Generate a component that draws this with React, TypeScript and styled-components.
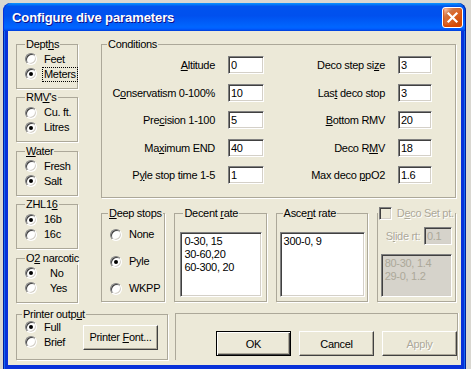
import React from 'react';
import styled, { createGlobalStyle } from 'styled-components';

const GlobalStyle = createGlobalStyle`
  * {
    box-sizing: border-box;
  }

  html,
  body {
    margin: 0;
    padding: 0;
  }

  body {
    background: #d9d7d1;
    color: #000;
    font-family: "Liberation Sans", Arial, sans-serif;
    font-size: 11px;
    letter-spacing: -0.3px;
  }
`;

type RadioGroupType = {
  label: React.ReactNode;
  options: string[];
  checked: number;
  focus?: number;
  indent?: number;
};

const leftGroups: RadioGroupType[] = [
  { label: <>Dept<u>h</u>s</>, options: ['Feet', 'Meters'], checked: 1, focus: 1 },
  { label: <>RM<u>V</u>'s</>, options: ['Cu. ft.', 'Litres'], checked: 1 },
  { label: <><u>W</u>ater</>, options: ['Fresh', 'Salt'], checked: 1 },
  { label: <>ZHL1<u>6</u></>, options: ['16b', '16c'], checked: 0 },
  { label: <>O<u>2</u> narcotic</>, options: ['No', 'Yes'], checked: 0, indent: 6 },
];

const conditions: [React.ReactNode, string, React.ReactNode, string][] = [
  [<><u>A</u>ltitude</>, '0', <>Deco step si<u>z</u>e</>, '3'],
  [<>C<u>o</u>nservatism 0-100%</>, '10', <>Las<u>t</u> deco stop</>, '3'],
  [<>Pre<u>c</u>ision 1-100</>, '5', <><u>B</u>ottom RMV</>, '20'],
  [<>Ma<u>x</u>imum END</>, '40', <>Deco R<u>M</u>V</>, '18'],
  [<>P<u>y</u>le stop time 1-5</>, '1', <>Max deco <u>p</u>pO2</>, '1.6'],
];

const CloseIcon = () => (
  <svg width="13" height="13" viewBox="0 0 13 13">
    <path d="M2.5 2.5 L10.5 10.5 M10.5 2.5 L2.5 10.5" stroke="#fff" strokeWidth="2.2" strokeLinecap="square" />
  </svg>
);

type RadioProps = {
  label: string;
  checked?: boolean;
  focus?: boolean;
  indent?: number;
};

const Radio = (props: RadioProps) => (
  <RadioRow>
    <RadioCircle $checked={props.checked} />
    <RadioText $focus={props.focus} $indent={props.indent}>
      {props.label}
    </RadioText>
  </RadioRow>
);

export default function App() {
  return (
    <>
      <GlobalStyle />
      <Window>
        <TitleBar>
          <Title>Configure dive parameters</Title>
          <CloseButton>
            <CloseIcon />
          </CloseButton>
        </TitleBar>
        <Frame>
          <Client>
            <TopRow>
              <LeftColumn>
                {leftGroups.map((g, i) => (
                  <Group key={i} $pl={8}>
                    <Legend>{g.label}</Legend>
                    <RadioStack>
                      {g.options.map((o, j) => (
                        <Radio
                          key={o}
                          label={o}
                          checked={g.checked === j}
                          focus={g.focus === j}
                          indent={g.indent}
                        />
                      ))}
                    </RadioStack>
                  </Group>
                ))}
              </LeftColumn>

              <RightColumn>
                <Group $pt={5.5} $pb={12.5}>
                  <Legend $lx={5}>Conditions</Legend>
                  <FieldGrid>
                    {conditions.map((row, i) => (
                      <React.Fragment key={i}>
                        <FieldLabel>{row[0]}</FieldLabel>
                        <Edit $w={36} readOnly value={row[1]} />
                        <FieldLabel>{row[2]}</FieldLabel>
                        <Edit $w={34} readOnly value={row[3]} />
                      </React.Fragment>
                    ))}
                  </FieldGrid>
                </Group>

                <LowerRow>
                  <Group $w={65} $pl={8} $pt={7}>
                    <Legend $lx={-2}><u>D</u>eep stops</Legend>
                    <DeepStack>
                      <Radio label="None" />
                      <Radio label="Pyle" checked />
                      <Radio label="WKPP" />
                    </DeepStack>
                  </Group>

                  <Group $w={93} $pl={5} $pr={4} $pt={12} $pb={4}>
                    <Legend $lx={3}>Decent <u>r</u>ate</Legend>
                    <ListBox>
                      <div>0-30, 15</div>
                      <div>30-60,20</div>
                      <div>60-300, 20</div>
                    </ListBox>
                  </Group>

                  <Group $w={93} $pl={3} $pr={2} $pt={12} $pb={4}>
                    <Legend $lx={3}>Asce<u>n</u>t rate</Legend>
                    <ListBox>
                      <div>300-0, 9</div>
                    </ListBox>
                  </Group>

                  <Group $w={80} $pl={3} $pr={3} $pt={7} $pb={4}>
                    <Legend $lx={-3}>
                      <CheckLegend>
                        <CheckBox />
                        <Disabled>
                          D<u>e</u>co Set pt.
                        </Disabled>
                      </CheckLegend>
                    </Legend>
                    <SlideRow>
                      <Disabled>
                        S<u>l</u>ide rt:
                      </Disabled>
                      <Edit $w={28} $disabled readOnly value="0.1" />
                    </SlideRow>
                    <ListBox $disabled>
                      <div>80-30, 1.4</div>
                      <div>29-0, 1.2</div>
                    </ListBox>
                  </Group>
                </LowerRow>
              </RightColumn>
            </TopRow>

            <BottomRow>
              <Group $w={152} $pl={8} $pr={9} $pb={9}>
                <Legend $lx={-3}>Printer outp<u>u</u>t</Legend>
                <PrinterBody>
                  <RadioStack>
                    <Radio label="Full" checked />
                    <Radio label="Brief" />
                  </RadioStack>
                  <PushButton>
                    Printer <u>F</u>ont...
                  </PushButton>
                </PrinterBody>
              </Group>

              <ButtonFrame>
                <PushButton $default>OK</PushButton>
                <PushButton>Cancel</PushButton>
                <PushButton disabled>Apply</PushButton>
              </ButtonFrame>
            </BottomRow>
          </Client>
        </Frame>
      </Window>
    </>
  );
}

const Window = styled.div`
  width: 463px;
  margin: 3px 0 0 3px;
  display: flex;
  flex-direction: column;
`;

const TitleBar = styled.div`
  height: 28px;
  padding: 0 3px 0 9px;
  display: flex;
  align-items: center;
  justify-content: space-between;
  border-radius: 8px 8px 0 0;
  background: linear-gradient(
    180deg,
    #0997ff 0%,
    #0053ee 12%,
    #0050ee 45%,
    #0066ff 86%,
    #005bff 93%,
    #003dd7 100%
  );
  box-shadow: inset 1px 0 #0831d9, inset -1px 0 #001ea0;
`;

const Title = styled.span`
  color: #fff;
  font-size: 13px;
  font-weight: bold;
  letter-spacing: -0.1px;
  text-shadow: 1px 1px #0f1089;
  padding-top: 1px;
`;

const CloseButton = styled.div`
  width: 21px;
  height: 21px;
  display: flex;
  align-items: center;
  justify-content: center;
  border: 1px solid #fff;
  border-radius: 3px;
  background: radial-gradient(
    circle at 90% 90%,
    #cc4600 0%,
    #dc6527 55%,
    #cd7546 70%,
    #ffccb2 90%,
    #fff 100%
  );
  box-shadow: inset 0 -1px 2px 1px #da4600;
`;

const Frame = styled.div`
  background: #0831d9;
  padding: 0 5px 5px;
  box-shadow: inset 1px 0 #001ea0, inset -1px 0 #001ea0, inset 0 -1px #001ea0,
    inset 2px 0 #166aee, inset -2px 0 #166aee;
`;

const Client = styled.div`
  background: #ece9d8;
  padding: 6.5px 3px 5.5px 8px;
  display: flex;
  flex-direction: column;
`;

const TopRow = styled.div`
  display: flex;
  align-items: flex-start;
  gap: 23px;
`;

const LeftColumn = styled.div`
  width: 62px;
  display: flex;
  flex-direction: column;
  gap: 2.5px;
`;

const RightColumn = styled.div`
  width: 355px;
  display: flex;
  flex-direction: column;
  gap: 9.5px;
`;

const Group = styled.fieldset<{
  $w?: number;
  $pl?: number;
  $pr?: number;
  $pt?: number;
  $pb?: number;
}>`
  margin: 0;
  min-width: 0;
  width: ${(p) => (p.$w ? `${p.$w}px` : 'auto')};
  padding: ${(p) => p.$pt ?? 1}px ${(p) => p.$pr ?? 0}px ${(p) => p.$pb ?? 6}px
    ${(p) => p.$pl ?? 0}px;
  border: 1px solid #aca899;
  box-shadow: 1px 1px 0 #fff;
  display: flex;
  flex-direction: column;
`;

const Legend = styled.legend<{ $lx?: number }>`
  padding: 0 1px;
  margin-left: ${(p) => p.$lx ?? 0}px;
  line-height: 13px;
  white-space: nowrap;
`;

const RadioStack = styled.div`
  display: flex;
  flex-direction: column;
`;

const DeepStack = styled.div`
  display: flex;
  flex-direction: column;
  gap: 12px;
`;

const RadioRow = styled.div`
  height: 15px;
  display: flex;
  align-items: center;
  gap: 6px;
`;

const RadioCircle = styled.span<{ $checked?: boolean }>`
  width: 12px;
  height: 12px;
  flex: none;
  display: flex;
  align-items: center;
  justify-content: center;
  border-radius: 50%;
  background: #fff;
  border: 1px solid;
  border-color: #808080 #fff #fff #808080;
  box-shadow: inset 1px 1px 0 #404040, inset -1px -1px 0 #d4d0c8;

  &::after {
    content: '';
    display: ${(p) => (p.$checked ? 'block' : 'none')};
    width: 4px;
    height: 4px;
    border-radius: 50%;
    background: #000;
  }
`;

const RadioText = styled.span<{ $focus?: boolean; $indent?: number }>`
  line-height: 13px;
  padding: 0 1px;
  margin-left: ${(p) => p.$indent ?? 0}px;
  outline: ${(p) => (p.$focus ? '1px dotted #000' : 'none')};
`;

const FieldGrid = styled.div`
  display: grid;
  grid-template-columns: 126px 36px 134px 34px;
  row-gap: 9.5px;
  align-items: center;
`;

const FieldLabel = styled.label`
  text-align: right;
  padding-right: 13px;
  white-space: nowrap;
`;

const Edit = styled.input<{ $w: number; $disabled?: boolean }>`
  width: ${(p) => p.$w}px;
  height: 18px;
  margin: 0;
  padding: 0 2px;
  font: inherit;
  letter-spacing: inherit;
  color: ${(p) => (p.$disabled ? '#aca899' : '#000')};
  background: ${(p) => (p.$disabled ? '#d6d3cb' : '#fff')};
  border: 1px solid;
  border-color: #808080 #fff #fff #808080;
  box-shadow: inset 1px 1px 0 #404040, inset -1px -1px 0 #d4d0c8;
  outline: none;
`;

const LowerRow = styled.div`
  height: 95px;
  display: flex;
  align-items: stretch;
  gap: 9px;
`;

const ListBox = styled.div<{ $disabled?: boolean }>`
  flex: 1;
  padding: 2px 3px;
  line-height: 13px;
  white-space: nowrap;
  color: ${(p) => (p.$disabled ? '#aca899' : '#000')};
  background: ${(p) => (p.$disabled ? '#d6d3cb' : '#fff')};
  border: 1px solid;
  border-color: #808080 #fff #fff #808080;
  box-shadow: inset 1px 1px 0 #404040, inset -1px -1px 0 #d4d0c8;
`;

const CheckLegend = styled.span`
  display: flex;
  align-items: center;
  gap: 5px;
`;

const CheckBox = styled.span`
  width: 13px;
  height: 13px;
  flex: none;
  background: #ece9d8;
  border: 1px solid;
  border-color: #808080 #fff #fff #808080;
  box-shadow: inset 1px 1px 0 #404040, inset -1px -1px 0 #d4d0c8;
`;

const Disabled = styled.span`
  color: #aca899;
  text-shadow: 1px 1px 0 #fff;
  white-space: nowrap;
`;

const SlideRow = styled.div`
  display: flex;
  align-items: center;
  justify-content: space-between;
  padding: 0 0 0 5px;
  margin-bottom: 9px;
`;

const BottomRow = styled.div`
  margin-top: 5px;
  display: flex;
  align-items: stretch;
  gap: 7px;
`;

const PrinterBody = styled.div`
  margin-top: -2px;
  display: flex;
  justify-content: space-between;
  align-items: flex-end;
`;

const PushButton = styled.button<{ $default?: boolean }>`
  width: 75px;
  height: 25px;
  margin: 0;
  padding: 0;
  flex: none;
  font: inherit;
  letter-spacing: inherit;
  color: ${(p) => (p.disabled ? '#aca899' : '#000')};
  text-shadow: ${(p) => (p.disabled ? '1px 1px 0 #fff' : 'none')};
  background: #ece9d8;
  border: 1px solid;
  border-color: ${(p) =>
    p.$default ? '#000' : '#fff #404040 #404040 #fff'};
  box-shadow: ${(p) =>
    p.$default
      ? 'inset 1px 1px 0 #fff, inset -1px -1px 0 #404040, inset -2px -2px 0 #aca899'
      : 'inset -1px -1px 0 #aca899'};
`;

const ButtonFrame = styled.div`
  flex: 1;
  margin-top: 5.5px;
  padding: 17px 0 0;
  display: flex;
  justify-content: flex-end;
  align-items: flex-start;
  gap: 8px;
  border: 1px solid #aca899;
  border-bottom: none;
  box-shadow: 1px 0 0 #fff;
`;
